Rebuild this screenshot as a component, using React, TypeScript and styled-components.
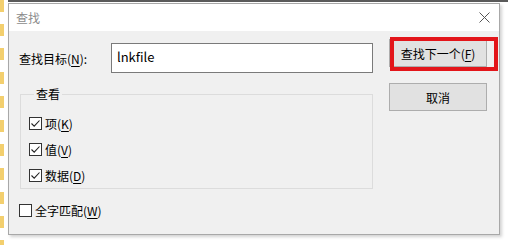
import React from 'react';
import styled, { createGlobalStyle } from 'styled-components';

const GlobalStyle = createGlobalStyle`
    html, body {
        margin: 0;
        padding: 0;
        background: #ffffff;
    }
    body {
        font-family: 'Noto Sans CJK SC', 'Noto Sans', sans-serif;
        font-size: 12px;
        color: #000000;
    }
`;

const Page = styled.div`
    width: 508px;
    height: 245px;
    display: flex;
    overflow: hidden;
    position: relative;
    background: #ffffff;
`;

const FolderStrip = styled.div`
    width: 8px;
    flex-shrink: 0;
    background: repeating-linear-gradient(
        to bottom,
        #f3cf6e 0px,
        #f3cf6e 12px,
        #ffffff 12px,
        #ffffff 24px
    );
    background-size: 4px 100%;
    background-repeat: no-repeat;
`;

const Desk = styled.div`
    flex: 1;
    display: flex;
    flex-direction: column;
    padding-top: 3px;
    background: linear-gradient(to bottom, #5a5a5a 0, #5a5a5a 2px, #ffffff 2px);
`;

const Dialog = styled.div`
    width: 492px;
    height: 232px;
    box-sizing: border-box;
    border: 1px solid #a8a8a8;
    box-shadow: 2px 2px 3px rgba(0, 0, 0, 0.18);
    background: #f0f0f0;
    display: flex;
    flex-direction: column;
`;

const TitleBar = styled.div`
    height: 27px;
    background: #ffffff;
    display: flex;
    align-items: center;
    justify-content: space-between;
    padding: 0 9px 0 7px;
`;

const Title = styled.span`
    color: #8c8c8c;
    font-size: 12px;
`;

const Body = styled.div`
    flex: 1;
    display: flex;
    gap: 16px;
    padding: 12px 0 0 10px;
`;

const LeftColumn = styled.div`
    width: 354px;
    display: flex;
    flex-direction: column;
`;

const TargetRow = styled.div`
    display: flex;
    align-items: center;
    justify-content: space-between;
    height: 30px;
`;

const Label = styled.span`
    white-space: nowrap;
`;

const Key = styled.u`
    text-underline-offset: 2px;
`;

const TextInput = styled.div`
    width: 262px;
    height: 30px;
    box-sizing: border-box;
    border: 1px solid #7a7a7a;
    background: #ffffff;
    padding: 3px 0 0 5px;
    font-size: 13px;
`;

const GroupBox = styled.fieldset`
    margin: 14px 0 0 1px;
    padding: 14px 0 0 8px;
    height: 102px;
    box-sizing: border-box;
    border: 1px solid #dcdcdc;
    display: flex;
    flex-direction: column;
    gap: 10px;
`;

const Legend = styled.legend`
    padding: 0 2px;
    margin-left: 5px;
    font-size: 12px;
    line-height: 14px;
`;

const CheckRow = styled.label<{ $top?: number }>`
    display: flex;
    align-items: center;
    gap: 3px;
    height: 16px;
    margin-top: ${(p) => p.$top ?? 0}px;
`;

const Box = styled.span`
    width: 13px;
    height: 13px;
    box-sizing: border-box;
    border: 1px solid #333333;
    background: #ffffff;
    display: flex;
    align-items: center;
    justify-content: center;
`;

const RightColumn = styled.div`
    display: flex;
    flex-direction: column;
    gap: 16px;
    margin-top: -4px;
`;

const ButtonWrap = styled.div`
    position: relative;
`;

const Button = styled.button`
    width: 98px;
    height: 28px;
    box-sizing: border-box;
    border: 1px solid #adadad;
    background: #e1e1e1;
    font-family: 'Noto Sans CJK SC', 'Noto Sans', sans-serif;
    font-size: 12px;
    color: #000000;
    padding: 0;
`;

const Highlight = styled.div`
    position: absolute;
    left: 1px;
    top: -2px;
    width: 108px;
    height: 34px;
    box-sizing: border-box;
    border: 4px solid #e3151a;
    pointer-events: none;
`;

function Check({ checked }: { checked: boolean }) {
    return (
        <Box>
            {checked && (
                <svg width="11" height="11" viewBox="0 0 11 11">
                    <path d="M1.5 5.5 L4.2 8.2 L9.5 2.5" fill="none" stroke="#222" strokeWidth="1.1" />
                </svg>
            )}
        </Box>
    );
}

function CloseIcon() {
    return (
        <svg width="11" height="11" viewBox="0 0 11 11">
            <path d="M0.5 0.5 L10.5 10.5 M10.5 0.5 L0.5 10.5" stroke="#555" strokeWidth="1" />
        </svg>
    );
}

export default function App() {
    return (
        <Page>
            <GlobalStyle />
            <FolderStrip />
            <Desk>
                <Dialog>
                    <TitleBar>
                        <Title>查找</Title>
                        <CloseIcon />
                    </TitleBar>
                    <Body>
                        <LeftColumn>
                            <TargetRow>
                                <Label>
                                    查找目标(<Key>N</Key>):
                                </Label>
                                <TextInput>lnkfile</TextInput>
                            </TargetRow>
                            <GroupBox>
                                <Legend>查看</Legend>
                                <CheckRow>
                                    <Check checked />
                                    <span>
                                        项(<Key>K</Key>)
                                    </span>
                                </CheckRow>
                                <CheckRow>
                                    <Check checked />
                                    <span>
                                        值(<Key>V</Key>)
                                    </span>
                                </CheckRow>
                                <CheckRow>
                                    <Check checked />
                                    <span>
                                        数据(<Key>D</Key>)
                                    </span>
                                </CheckRow>
                            </GroupBox>
                            <CheckRow $top={13}>
                                <Check checked={false} />
                                <span>
                                    全字匹配(<Key>W</Key>)
                                </span>
                            </CheckRow>
                        </LeftColumn>
                        <RightColumn>
                            <ButtonWrap>
                                <Button>
                                    查找下一个(<Key>F</Key>)
                                </Button>
                                <Highlight />
                            </ButtonWrap>
                            <Button>取消</Button>
                        </RightColumn>
                    </Body>
                </Dialog>
            </Desk>
        </Page>
    );
}
